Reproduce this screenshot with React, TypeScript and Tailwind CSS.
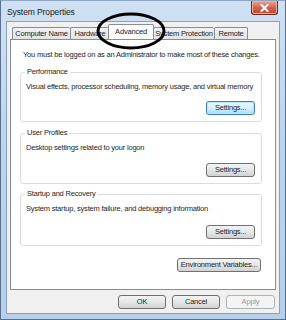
import React from "react";

const font = { fontFamily: '"Liberation Sans", Arial, sans-serif' };

const Btn = ({
  label,
  w,
  focus,
  disabled,
}: {
  label: string;
  w: string;
  focus?: boolean;
  disabled?: boolean;
}) => {
  let cls =
    "border-[#707070] bg-linear-to-b from-[#f3f3f3] via-[#e6e6e6] to-[#d2d2d2] text-[#1e1e1e]";
  if (focus)
    cls =
      "border-[#3c7fb1] bg-linear-to-b from-[#eaf6fd] via-[#d9f0fc] to-[#a7d9f5] text-[#1e1e1e] shadow-[inset_0_0_0_1px_#bfe5fb]";
  if (disabled) cls = "border-[#adb2b5] bg-[#f4f4f4] text-[#9a9a9a]";
  return (
    <div
      className={`${w} h-[14px] rounded-[3px] border flex items-center justify-center whitespace-nowrap text-[7.5px] tracking-[-0.2px] leading-none ${cls}`}
    >
      {label}
    </div>
  );
};

const Group = ({
  title,
  text,
  h,
  focus,
}: {
  title: string;
  text: string;
  h: string;
  focus?: boolean;
}) => (
  <div
    className={`relative ${h} ml-[9px] mr-[13px] border border-[#dcdcdc] rounded-[3px] flex flex-col pl-[5px] pr-[6px] pt-[9px]`}
  >
    <div className="absolute -top-[6px] left-[4px] bg-white px-[2px] text-[7.5px] tracking-[-0.2px] leading-[10px] text-[#1e1e1e]">
      {title}
    </div>
    <div className="text-[7.5px] tracking-[-0.2px] leading-[10px] text-[#1e1e1e] whitespace-nowrap">
      {text}
    </div>
    <div className="flex-1" />
    <div className="flex justify-end pb-[6px]">
      <Btn label="Settings..." w="w-[49px]" focus={focus} />
    </div>
  </div>
);

const Tab = ({ label, w, active }: { label: string; w: string; active?: boolean }) => (
  <div
    className={
      active
        ? `${w} h-[15px] -mb-px border border-[#898c95] border-b-0 bg-white rounded-t-[2px] flex items-center justify-center whitespace-nowrap text-[7.5px] tracking-[-0.2px] text-[#1e1e1e] z-10 -mx-[1px]`
        : `${w} h-[12px] mt-[3px] border border-[#898c95] border-b-0 border-r-0 last:border-r bg-linear-to-b from-[#f2f2f2] to-[#e3e3e3] rounded-t-[2px] flex items-center justify-center whitespace-nowrap text-[7.5px] tracking-[-0.2px] text-[#1e1e1e]`
    }
  >
    {label}
  </div>
);

export default function App() {
  return (
    <div
      className="relative w-[286px] h-[320px] overflow-hidden bg-linear-to-b from-[#cfe0f3] via-[#bcd3ec] to-[#b7cfe9] border border-[#5a708c] border-t-[#8fa6c2] flex flex-col"
      style={font}
    >
      {/* title bar */}
      <div className="h-[20px] flex items-start justify-between shrink-0">
        <div className="pl-[6px] pt-[6px] text-[8.5px] tracking-[-0.1px] leading-[10px] text-[#1b1b1b]">
          System Properties
        </div>
        <div className="mr-[7px] w-[27px] h-[14px] rounded-b-[3px] border border-t-0 border-[#6d2a1e] bg-linear-to-b from-[#e8a797] via-[#d2634d] to-[#c1432d] flex items-center justify-center shadow-[inset_0_0_0_1px_#e9b3a3]">
          <svg width="9" height="8" viewBox="0 0 9 8">
            <path d="M1.5 1 L7.5 7 M7.5 1 L1.5 7" stroke="#fff" strokeWidth="2" strokeLinecap="square" />
          </svg>
        </div>
      </div>

      {/* client area */}
      <div className="mx-[5px] h-[293px] bg-[#f0f0f0] border border-[#8aa0bb] flex flex-col px-[3px] pt-[2px]">
        <div className="flex pl-[2px] h-[15px]">
          <Tab label="Computer Name" w="w-[58px]" />
          <Tab label="Hardware" w="w-[39px]" />
          <Tab label="Advanced" w="w-[46px]" active />
          <Tab label="System Protection" w="w-[61px]" />
          <Tab label="Remote" w="w-[34px]" />
        </div>
        <div className="h-[251px] bg-white border border-[#898c95] flex flex-col">
          <div className="pl-[12px] pt-[10px] h-[32px] text-[7.5px] tracking-[-0.2px] leading-[10px] text-[#1e1e1e] whitespace-nowrap">
            You must be logged on as an Administrator to make most of these changes.
          </div>
          <Group
            title="Performance"
            text="Visual effects, processor scheduling, memory usage, and virtual memory"
            h="h-[50px]"
            focus
          />
          <div className="h-[11px]" />
          <Group title="User Profiles" text="Desktop settings related to your logon" h="h-[51px]" />
          <div className="h-[10px]" />
          <Group
            title="Startup and Recovery"
            text="System startup, system failure, and debugging information"
            h="h-[52px]"
          />
          <div className="flex justify-end mr-[14px] mt-[12px]">
            <Btn label="Environment Variables..." w="w-[84px]" />
          </div>
        </div>
        <div className="flex justify-end gap-[6px] pt-[5px] pr-[1px]">
          <Btn label="OK" w="w-[48px]" />
          <Btn label="Cancel" w="w-[48px]" />
          <Btn label="Apply" w="w-[49px]" disabled />
        </div>
      </div>

      {/* annotation ellipse */}
      <svg className="absolute left-0 top-0 pointer-events-none" width="286" height="60">
        <ellipse cx="130" cy="30" rx="33" ry="17" fill="none" stroke="#000" strokeWidth="3" />
      </svg>
    </div>
  );
}
